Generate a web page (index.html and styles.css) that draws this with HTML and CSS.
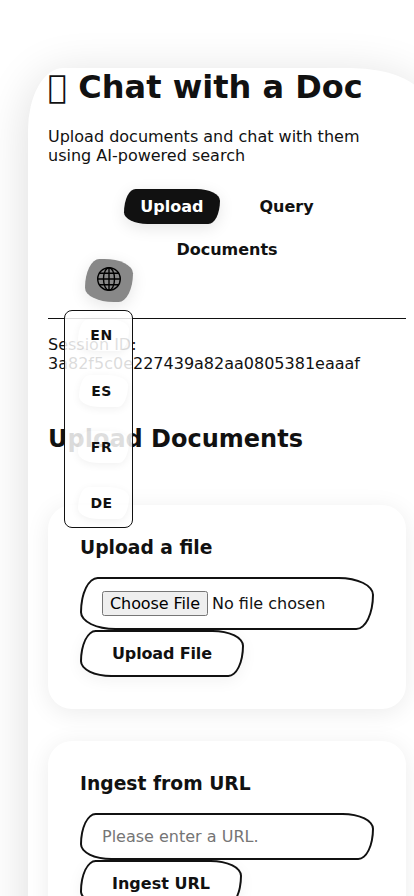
FILE: index.html
```html
<!DOCTYPE html>
<html lang="en">
<head>
<meta charset="utf-8">
<title>Chat with a Doc</title>
<link rel="stylesheet" href="styles.css">
</head>
<body>
<div class="container">
  <header class="header">
    <h1>&#xF8F0; Chat with a Doc</h1>
    <p>Upload documents and chat with them using AI-powered search</p>
    <nav class="nav">
      <a class="nav-link active">Upload</a>
      <a class="nav-link">Query</a>
      <a class="nav-link">Documents</a>
    </nav>
    <div class="language">
      <button class="language-toggle" aria-label="Language">
        <svg width="24" height="24" viewBox="0 0 24 24" fill="none" stroke="#000" stroke-width="1.4">
          <circle cx="12" cy="12" r="11.3"/>
          <ellipse cx="12" cy="12" rx="5.5" ry="11.3"/>
          <path d="M12 .7v22.6M.7 12h22.6M2.3 6.3h19.4M2.3 17.7h19.4"/>
        </svg>
      </button>
      <div class="language-menu">
        <button>EN</button>
        <button>ES</button>
        <button>FR</button>
        <button>DE</button>
      </div>
    </div>
  </header>
  <main>
    <p class="session">Session ID: 3a82f5c0e227439a82aa0805381eaaaf</p>
    <h2>Upload Documents</h2>
    <section class="card">
      <h3>Upload a file</h3>
      <input class="field" type="file">
      <button class="submit submit-file">Upload File</button>
    </section>
    <section class="card">
      <h3>Ingest from URL</h3>
      <input class="field" type="text" placeholder="Please enter a URL.">
      <button class="submit">Ingest URL</button>
    </section>
  </main>
</div>
</body>
</html>
```
FILE: styles.css
```css
* {
  box-sizing: border-box;
}

html {
  overflow: hidden;
}

body {
  margin: 0;
  height: 896px;
  overflow: hidden;
  background: #fff;
  color: #111;
  font-family: "DejaVu Sans", sans-serif;
  font-size: 16px;
}

button,
input {
  font: inherit;
  color: inherit;
}

.container {
  width: 398px;
  height: 1000px;
  margin: 68px 0 0 28px;
  padding: 0 20px;
  background: #fff;
  border-radius: 35px 75px 35px 75px / 62px 36px 62px 36px;
  box-shadow: 0 8px 48px rgba(0, 0, 0, 0.14);
}

.header {
  position: relative;
  height: 251px;
  border-bottom: 1px solid #111;
}

h1 {
  margin: 0 0 21px;
  font-size: 32px;
  line-height: 38px;
}

p {
  margin: 0;
}

.nav {
  display: flex;
  flex-wrap: wrap;
  justify-content: center;
  gap: 8px 24px;
  margin-top: 24px;
  padding: 0 40px;
}

.nav-link {
  padding: 8px 16px;
  font-weight: 700;
  border-radius: 30px 60px 30px 60px / 60px 30px 60px 30px;
}

.nav-link.active {
  background: #111;
  color: #fff;
  box-shadow: 0 4px 16px rgba(0, 0, 0, 0.1);
}

.language {
  position: absolute;
  top: 191px;
  left: 16px;
}

.language-toggle {
  display: block;
  width: 48px;
  height: 43px;
  margin-left: 21px;
  padding: 8px 12px 11px;
  border: 0;
  background: #888;
  border-radius: 30px 60px 30px 60px / 60px 30px 60px 30px;
  box-shadow: 0 4px 16px rgba(0, 0, 0, 0.1);
}

.language-toggle svg {
  display: block;
}

.language-menu {
  display: flex;
  flex-direction: column;
  align-items: center;
  gap: 24px;
  width: 69px;
  height: 218px;
  margin-top: 8px;
  padding: 8px 0 8px 10px;
  background: rgba(255, 255, 255, 0.85);
  border: 1px solid #111;
  border-radius: 8px;
}

.language-menu button {
  height: 32px;
  padding: 8px 16.5px 8px 12.5px;
  border: 0;
  background: rgba(255, 255, 255, 0.1);
  font-size: 14px;
  font-weight: 700;
  line-height: 16px;
  letter-spacing: 0.5px;
  border-radius: 30px 60px 30px 60px / 60px 30px 60px 30px;
  box-shadow: 0 2px 8px rgba(0, 0, 0, 0.06);
}

.session {
  margin-top: 16px;
}

h2 {
  margin: 52px 0;
  font-size: 24px;
  line-height: 28px;
}

.card {
  margin-bottom: 32px;
  padding: 32px;
  border-radius: 24px;
  background: #fff;
  box-shadow: 0 4px 24px rgba(0, 0, 0, 0.08);
}

h3 {
  margin: 0 0 18px;
  font-size: 18.72px;
  line-height: 22px;
}

.field,
.submit {
  display: block;
  border: 2px solid #111;
  background: #fff;
  border-radius: 30px 60px 30px 60px / 60px 30px 60px 30px;
}

.field {
  width: 100%;
  padding: 12px 20px;
}

.field::file-selector-button {
  font: inherit;
  letter-spacing: -0.09px;
}

.submit {
  padding: 12px 30px;
  font-weight: 700;
  box-shadow: 0 4px 16px rgba(0, 0, 0, 0.05);
}

.submit-file {
  letter-spacing: -0.15px;
}
```
